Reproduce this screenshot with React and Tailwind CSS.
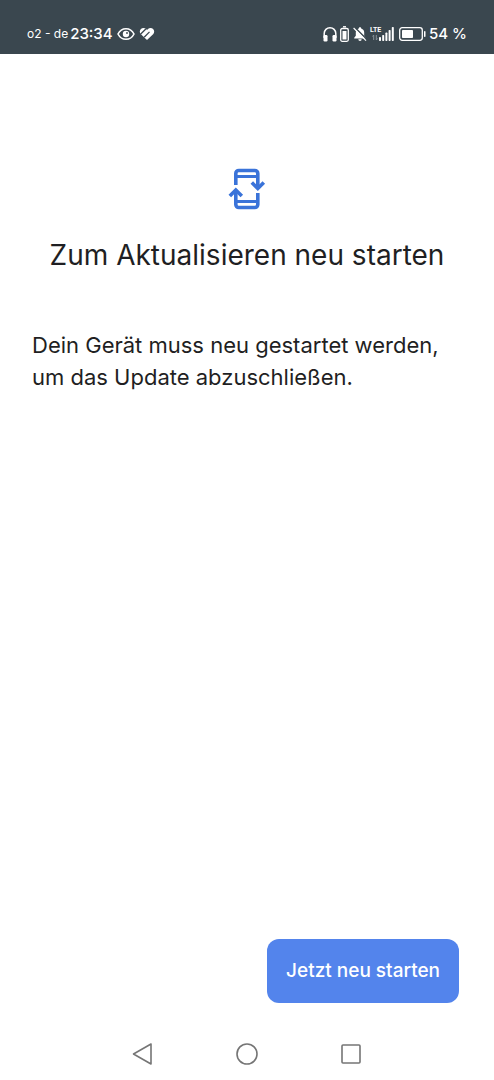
import React from "react";

const StatusBar = () => {
  return (
    <header className="flex h-[54px] items-end justify-between bg-[#3a474f] px-[27px] pb-2 font-['Inter','Liberation_Sans',sans-serif] text-white">
      <div className="flex h-6 items-center">
        <span className="text-xs">o2 - de</span>
        <span className="ml-0.5 text-[15px] font-medium">23:34</span>
        <svg className="ml-1 h-4 w-[18px]" viewBox="0 0 18 16" fill="none">
          <path
            d="M1 8C2.8 4.400 5.600 2.700 9 2.700s6.200 1.700 8 5.300c-1.800 3.600-4.600 5.300-8 5.300S2.800 11.600 1 8Z"
            stroke="currentColor"
            strokeWidth="1.600"
          />
          <circle cx="9" cy="8" r="3.200" fill="currentColor" />
          <circle cx="10" cy="7" r=".9" fill="#3a474f" />
        </svg>
        <svg className="ml-1 h-4 w-4" viewBox="0 0 16 16" fill="none">
          <path
            d="M8 14 1.900 8.200C.4 6.600.5 4.300 1.900 3c1.500-1.400 3.800-1.300 5.100.1l1 1 1-1c1.300-1.400 3.600-1.500 5.100-.1 1.400 1.300 1.500 3.600 0 5.200L8 14Z"
            fill="currentColor"
          />
          <path d="M1.500 8.300 6.800 3M5.200 11.200 10.500 5.900" stroke="#3a474f" strokeWidth="1.300" />
        </svg>
      </div>

      <div className="flex h-6 items-center">
        <svg className="h-4 w-[14px]" viewBox="0 0 14 16" fill="none">
          <path
            d="M1.200 12V7.500a5.800 5.800 0 0 1 11.600 0V12"
            stroke="currentColor"
            strokeWidth="1.500"
          />
          <rect x=".5" y="9" width="4" height="6.500" rx="1.200" fill="currentColor" />
          <rect x="9.500" y="9" width="4" height="6.500" rx="1.200" fill="currentColor" />
        </svg>
        <svg className="ml-[3px] h-4 w-[9px]" viewBox="0 0 9 16" fill="none">
          <path d="M3 .8h3" stroke="currentColor" strokeWidth="1.400" />
          <rect x=".7" y="2.500" width="7.600" height="12.800" rx="1.500" stroke="currentColor" strokeWidth="1.300" />
          <rect x="2.500" y="5" width="4" height="8.500" fill="currentColor" />
        </svg>
        <svg className="ml-1 h-4 w-[14px]" viewBox="0 0 14 16">
          <path
            d="M7 1.200c.8 0 1.200.5 1.200 1.200 2 .6 3 2.200 3 4.200v3.200l1.600 1.900v.8H1.200v-.8l1.600-1.900V6.600c0-2 1-3.600 3-4.200 0-.7.400-1.200 1.200-1.200ZM5.300 13.300h3.400a1.700 1.700 0 0 1-3.400 0Z"
            fill="currentColor"
          />
          <path d="M1.500 1 14 13.500" stroke="#3a474f" strokeWidth="1.500" />
          <path d="m.6 2 12.400 12.600" stroke="currentColor" strokeWidth="1.200" />
        </svg>
        <div className="ml-[3px] flex h-4 items-end">
          <div className="flex h-4 w-[9px] flex-col">
            <span className="font-['Roboto',sans-serif] text-[7px] font-bold leading-[8px]">LTE</span>
            <svg className="ml-0.5 h-[7px] w-[6px]" viewBox="0 0 6 7" fill="none" stroke="#8b959b">
              <path d="M1.700 6V1L.5 2.500M4.300 1v5l1.200-1.500" />
            </svg>
          </div>
          <svg className="h-4 w-[15px]" viewBox="0 0 15 16" fill="currentColor">
            <rect x="0" y="11" width="2" height="4" rx=".7" />
            <rect x="3.200" y="9" width="2" height="6" rx=".7" />
            <rect x="6.400" y="6.500" width="2" height="8.500" rx=".7" />
            <rect x="9.600" y="4" width="2" height="11" rx=".7" />
            <rect x="12.800" y="1" width="2" height="14" rx=".7" />
          </svg>
        </div>
        <svg className="ml-[5px] h-4 w-[27px]" viewBox="0 0 27 16" fill="none">
          <rect x=".7" y="1.700" width="22.600" height="12.600" rx="2.500" stroke="currentColor" strokeWidth="1.300" />
          <rect x="3" y="4" width="11" height="8" rx=".8" fill="currentColor" />
          <rect x="25" y="5" width="1.500" height="6" rx=".7" fill="currentColor" />
        </svg>
        <span className="ml-[3px] text-[15px] font-medium">54 %</span>
      </div>
    </header>
  );
};

const RestartIcon = () => {
  return (
    <svg className="h-11 w-11" viewBox="0 0 44 44" fill="none" stroke="#3a73d9" strokeWidth="3.600">
      <path d="M10.800 18V6.500a3 3 0 0 1 3-3h16a3 3 0 0 1 3 3V20" />
      <path d="M10.800 9.500h22" strokeWidth="3" />
      <path d="m26.800 15.500 6 6 6-6" />
      <path d="M32.800 26v11.500a3 3 0 0 1-3 3h-16a3 3 0 0 1-3-3V24.500" />
      <path d="M10.800 34.500h22" strokeWidth="3" />
      <path d="m4.800 29 6-6 6 6" />
    </svg>
  );
};

const NavigationBar = () => {
  return (
    <nav className="flex h-[53px] items-center justify-center gap-20 text-[#757575]">
      <button type="button" aria-label="Zurück">
        <svg className="h-6 w-6" viewBox="0 0 24 24" fill="none" stroke="currentColor" strokeWidth="1.600" strokeLinejoin="round">
          <path d="M20 2v20L2.500 12Z" />
        </svg>
      </button>
      <button type="button" aria-label="Startbildschirm">
        <svg className="h-6 w-6" viewBox="0 0 24 24" fill="none" stroke="currentColor" strokeWidth="1.600">
          <circle cx="12" cy="12" r="10" />
        </svg>
      </button>
      <button type="button" aria-label="Letzte Apps">
        <svg className="h-6 w-6" viewBox="0 0 24 24" fill="none" stroke="currentColor" strokeWidth="1.600">
          <rect x="3" y="3" width="18" height="18" rx="1" />
        </svg>
      </button>
    </nav>
  );
};

const App = () => {
  return (
    <div className="flex min-h-screen flex-col bg-white font-['Inter','Liberation_Sans',sans-serif] text-[#1f1f23]">
      <StatusBar />

      <main className="flex flex-1 flex-col px-8 pt-[113px]">
        <div className="flex flex-col items-center">
          <RestartIcon />
          <h1 className="mt-6 text-center text-[28px] leading-10">
            Zum Aktualisieren neu starten
          </h1>
        </div>

        <p className="mt-[54px] text-[22px] leading-8">
          Dein Gerät muss neu gestartet werden, um das Update abzuschließen.
        </p>

        <div className="mt-auto flex justify-end pr-[3px] pb-6">
          <button
            type="button"
            className="h-16 rounded-xl bg-[#5384ec] px-[19px] text-[19px] font-medium text-white"
          >
            Jetzt neu starten
          </button>
        </div>
      </main>

      <NavigationBar />
    </div>
  );
};

export default App;
